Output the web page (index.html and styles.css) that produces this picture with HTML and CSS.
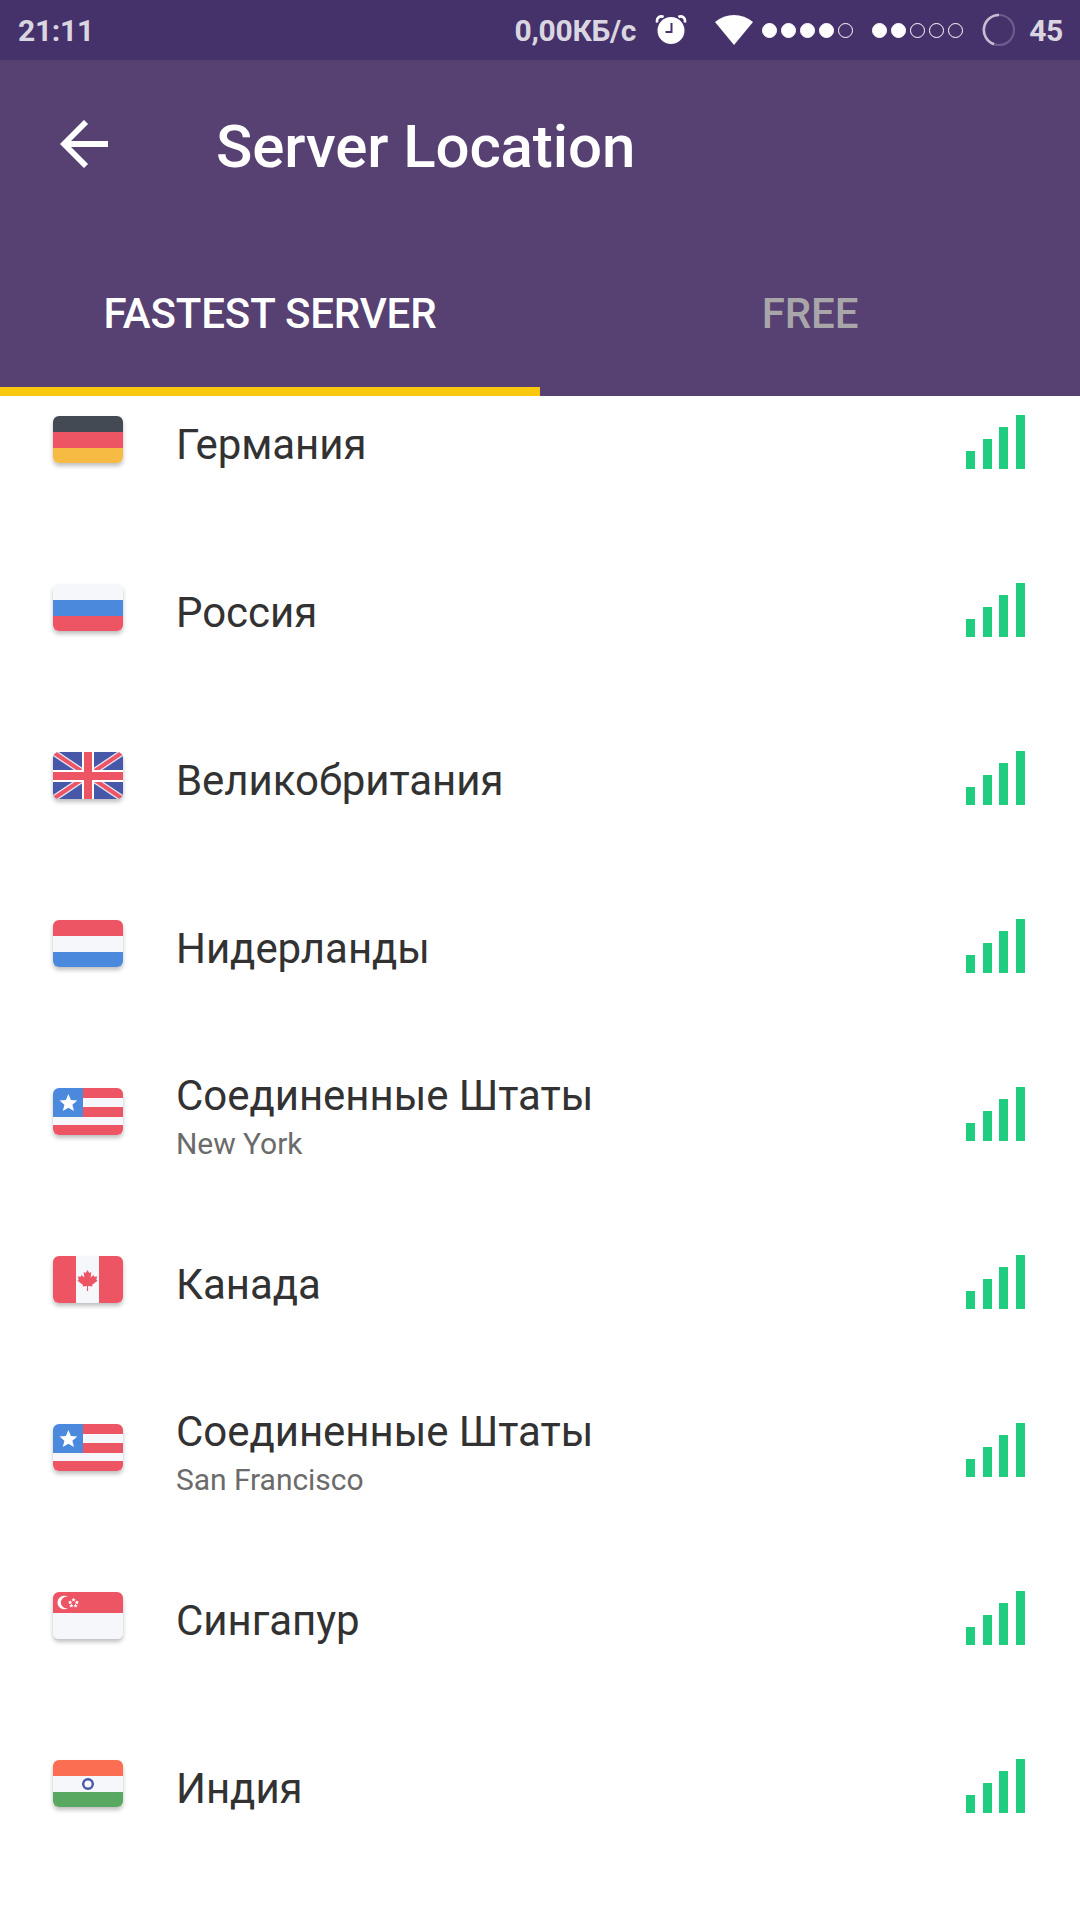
FILE: index.html
```html
<!DOCTYPE html>
<html lang="ru">
<head>
    <meta charset="UTF-8">
    <meta name="viewport" content="width=device-width, initial-scale=1.0">
    <title>Server Location</title>
    <link rel="stylesheet" href="styles.css">
</head>
<body>
    <!-- shared icons -->
    <svg class="sprite" width="0" height="0">
        <symbol id="signal" viewBox="0 0 59 54">
            <path fill="#20cc7e" d="M0 36h9v18H0zM17 24h9v30h-9zM33 12h9v42h-9zM50 0h9v54h-9z"/>
        </symbol>
        <symbol id="flag-us" viewBox="0 0 70 47">
            <path fill="#f5f7fb" d="M0 0h70v47H0z"/>
            <path fill="#ed5565" d="M30 0h40v10H30zM30 19h40v10H30zM0 37h70v10H0z"/>
            <path fill="#4a89dc" d="M0 0h30v29H0z"/>
            <path fill="#fff" d="M15.4 6l2.5 6 6.4.5-4.9 4.2 1.6 6.4-5.6-3.4-5.6 3.4 1.6-6.4-4.9-4.2 6.4-.5z"/>
        </symbol>
    </svg>

    <div class="status-bar">
        <span class="time">21:11</span>
        <span class="speed">0,00КБ/с</span>
        <svg class="alarm" width="32" height="30" viewBox="0 0 32 30">
            <circle cx="16" cy="15.5" r="13.5" fill="#fff"/>
            <path d="M2.2 7.5C1 3 5 .2 8.6 2M29.8 7.5C31 3 27 .2 23.4 2" fill="none" stroke="#fff" stroke-width="2.6"/>
            <path d="M16.5 8v9h-6" fill="none" stroke="#46326b" stroke-width="2"/>
        </svg>
        <svg class="wifi" width="38" height="30" viewBox="0 0 38 30">
            <path d="M0 7Q8.5 0 19 0T38 7L19 30z" fill="#fff"/>
        </svg>
        <div class="dots sim1"><i class="on"></i><i class="on"></i><i class="on"></i><i class="on"></i><i></i></div>
        <div class="dots sim2"><i class="on"></i><i class="on"></i><i></i><i></i><i></i></div>
        <svg class="battery" width="34" height="34" viewBox="0 0 34 34">
            <circle cx="17" cy="17" r="15" fill="none" stroke="#6c5b8b" stroke-width="2.2"/>
            <path d="M17 2A15 15 0 0 0 12 31.2" fill="none" stroke="#c5bdd1" stroke-width="2.6"/>
        </svg>
        <span class="percent">45</span>
    </div>

    <header>
        <div class="toolbar">
            <svg class="back" width="48" height="48" viewBox="0 0 48 48">
                <path d="M48 24H6M26 2L4 24l22 22" fill="none" stroke="#fff" stroke-width="5.8"/>
            </svg>
            <h1>Server Location</h1>
        </div>
        <nav>
            <a class="tab active">FASTEST SERVER</a>
            <a class="tab">FREE</a>
        </nav>
    </header>

    <div class="servers">
        <div class="server">
            <svg class="flag" viewBox="0 0 70 47">
                <path fill="#434a54" d="M0 0h70v16H0z"/>
                <path fill="#ed5565" d="M0 16h70v16H0z"/>
                <path fill="#f6bb42" d="M0 32h70v15H0z"/>
            </svg>
            <div class="name">Германия</div>
            <svg class="signal"><use href="#signal"/></svg>
        </div>
        <div class="server">
            <svg class="flag" viewBox="0 0 70 47">
                <path fill="#f5f7fb" d="M0 0h70v16H0z"/>
                <path fill="#4a89dc" d="M0 16h70v16H0z"/>
                <path fill="#ed5565" d="M0 32h70v15H0z"/>
            </svg>
            <div class="name">Россия</div>
            <svg class="signal"><use href="#signal"/></svg>
        </div>
        <div class="server">
            <svg class="flag" viewBox="0 0 70 47">
                <path fill="#4758a9" d="M0 0h70v47H0z"/>
                <path stroke="#e4e6f2" stroke-width="6.6" d="M0 0l70 47M70 0L0 47"/>
                <path stroke="#ed5565" stroke-width="4" d="M0 0l70 47M70 0L0 47"/>
                <path fill="#fff" d="M29 0h12v47H29zM0 18h70v12H0z"/>
                <path fill="#ed5565" d="M31 0h8v47h-8zM0 20h70v8H0z"/>
            </svg>
            <div class="name">Великобритания</div>
            <svg class="signal"><use href="#signal"/></svg>
        </div>
        <div class="server">
            <svg class="flag" viewBox="0 0 70 47">
                <path fill="#ed5565" d="M0 0h70v16H0z"/>
                <path fill="#f5f7fb" d="M0 16h70v16H0z"/>
                <path fill="#4a89dc" d="M0 32h70v15H0z"/>
            </svg>
            <div class="name">Нидерланды</div>
            <svg class="signal"><use href="#signal"/></svg>
        </div>
        <div class="server">
            <svg class="flag"><use href="#flag-us"/></svg>
            <div class="name">Соединенные Штаты<span class="city">New York</span></div>
            <svg class="signal"><use href="#signal"/></svg>
        </div>
        <div class="server">
            <svg class="flag" viewBox="0 0 70 47">
                <path fill="#ed5565" d="M0 0h70v47H0z"/>
                <path fill="#f5f7fb" d="M23 0h23v47H23z"/>
                <path fill="#ed5565" d="M34.5 14l1.8 3 2-1-.6 5.5 2.8-2.5.8 1.8 3-.3-1 3 1.2 1.2-5.5 4.3.5 1.5-4.5-.5.1 5h-1.2l.1-5-4.5.5.5-1.5-5.5-4.3 1.2-1.2-1-3 3 .3.8-1.8 2.8 2.5-.6-5.5 2 1z"/>
            </svg>
            <div class="name">Канада</div>
            <svg class="signal"><use href="#signal"/></svg>
        </div>
        <div class="server">
            <svg class="flag"><use href="#flag-us"/></svg>
            <div class="name">Соединенные Штаты<span class="city">San Francisco</span></div>
            <svg class="signal"><use href="#signal"/></svg>
        </div>
        <div class="server">
            <svg class="flag" viewBox="0 0 70 47">
                <path fill="#f5f7fb" d="M0 0h70v47H0z"/>
                <path fill="#ed5565" d="M0 0h70v21H0z"/>
                <path fill="#fff" d="M15 5A6.7 6.7 0 1 0 15 16A5.7 5.7 0 1 1 15 5z"/>
                <g fill="#fff">
                    <path id="star" d="M20.5 5.5l.6 1.4 1.5.1-1.1 1 .3 1.5-1.3-.8-1.3.8.3-1.5-1.1-1 1.5-.1z"/>
                    <use href="#star" x="-3.4" y="2.7"/>
                    <use href="#star" x="3.4" y="2.7"/>
                    <use href="#star" x="-2.1" y="6"/>
                    <use href="#star" x="2.1" y="6"/>
                </g>
            </svg>
            <div class="name">Сингапур</div>
            <svg class="signal"><use href="#signal"/></svg>
        </div>
        <div class="server">
            <svg class="flag" viewBox="0 0 70 47">
                <path fill="#fc6e51" d="M0 0h70v16H0z"/>
                <path fill="#f5f7fb" d="M0 16h70v16H0z"/>
                <path fill="#58a862" d="M0 32h70v15H0z"/>
                <circle cx="35" cy="24" r="4.8" fill="none" stroke="#4758a9" stroke-width="2.4"/>
            </svg>
            <div class="name">Индия</div>
            <svg class="signal"><use href="#signal"/></svg>
        </div>
    </div>
</body>
</html>
```

FILE: styles.css
```css
body {
    font-family: Roboto, "Noto Sans", sans-serif;
    margin: 0;
    padding: 0;
    height: 1920px;
    overflow: hidden;
    background-color: #fff;
}
.sprite {
    display: block;
}
.status-bar {
    box-sizing: border-box;
    height: 60px;
    padding: 0 17px 0 18px;
    display: flex;
    align-items: center;
    background-color: #46326b;
    color: #dad6e1;
    font-size: 30px;
    font-weight: bold;
    letter-spacing: -0.3px;
}
.speed {
    margin-left: auto;
}
.alarm {
    margin-left: 19px;
}
.wifi {
    margin-left: 28px;
}
.dots {
    display: flex;
    gap: 4px;
}
.dots i {
    box-sizing: border-box;
    width: 15px;
    height: 15px;
    border: 1px solid #fff;
    border-radius: 50%;
}
.dots .on {
    background-color: #fff;
}
.sim1 {
    margin-left: 9px;
}
.sim2 {
    margin-left: 19px;
}
.battery {
    margin-left: 19px;
}
.percent {
    margin-left: 13px;
}
header {
    height: 336px;
    background-color: #574072;
    color: #fff;
}
.toolbar {
    height: 168px;
    padding-left: 60px;
    display: flex;
    align-items: center;
}
h1 {
    margin: 4px 0 0 108px;
    font-size: 60px;
    font-weight: 500;
    letter-spacing: -0.1px;
}
nav {
    display: flex;
    height: 168px;
}
.tab {
    box-sizing: border-box;
    flex: 1;
    padding-top: 3px;
    border-bottom: 9px solid transparent;
    line-height: 166px;
    height: 168px;
    text-align: center;
    font-size: 42px;
    font-weight: 500;
    letter-spacing: -0.15px;
    color: #a9a6a9;
}
.active {
    color: #fff;
    border-color: #f9c70c;
}
/* list is scrolled a little, first row starts under the header */
.servers {
    margin-top: -38px;
}
.server {
    box-sizing: border-box;
    height: 168px;
    padding: 0 55px 0 53px;
    display: flex;
    align-items: center;
}
.flag {
    width: 70px;
    height: 47px;
    margin-bottom: 5px;
    border-radius: 6px;
    box-shadow: 0 3px 4px rgba(0, 0, 0, 0.25);
}
.name {
    flex: 1;
    margin-left: 53px;
    padding-top: 5px;
    font-size: 42px;
    line-height: 50px;
    letter-spacing: -0.05px;
    color: #323232;
}
.city {
    display: block;
    margin-top: 5px;
    font-size: 30px;
    line-height: 36px;
    color: #6b6b6b;
}
.signal {
    width: 59px;
    height: 54px;
}
```
